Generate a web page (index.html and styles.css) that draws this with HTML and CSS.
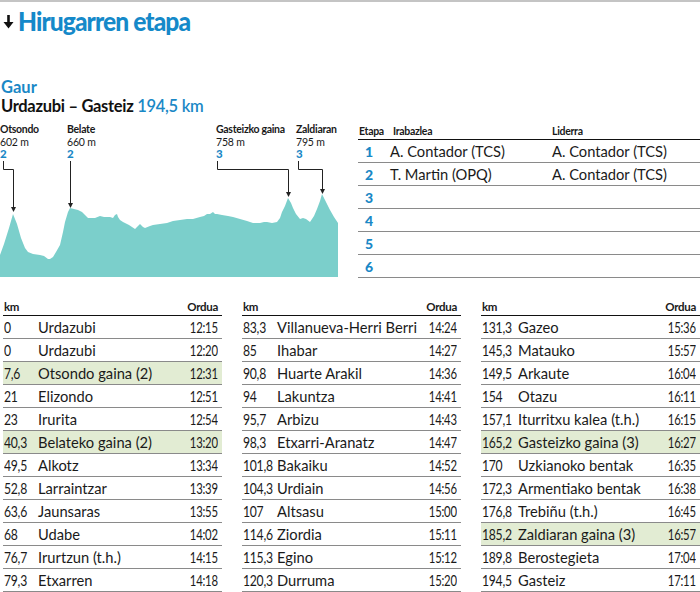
FILE: index.html
```html
<!DOCTYPE html>
<html lang="eu">
<head>
<meta charset="utf-8">
<title>Hirugarren etapa</title>
<link rel="stylesheet" href="styles.css">
</head>
<body>
<div class="page">
  <div class="topline"></div>
  <h1 class="title">
    <svg class="arrow" width="11" height="14" viewBox="0 0 11 14"><path d="M5.5,0 V9" stroke="#111" stroke-width="2.6" fill="none"/><polygon points="0.5,7 10.5,7 5.5,13.5" fill="#111"/></svg>
    <span class="title-text">Hirugarren etapa</span>
  </h1>
  <div class="route">
    <div class="gaur">Gaur</div>
    <div class="path">Urdazubi – Gasteiz <span class="dist">194,5 km</span></div>
  </div>

  <div class="mid">
    <div class="profile">
      <svg width="340" height="160" viewBox="0 0 340 160" class="profile-svg">
        <polygon class="terrain" points="0,135 4,124 9,108 13,94 17,104 21,118 25,128 28,132 33,134 40,135 44,136 48,139 50,139 53,137 56,132 60,125 63,112 65,102 68,92 70,88 74,89 78,90 82,92 86,96 88,98 92,98 95,98 100,96 104,97 110,97 113,98 115,95 117,94 118,97 120,100 123,102 125,103 129,105 132,107 135,109 138,106 140,104 143,107 145,108 150,106 153,105 160,104 167,103 170,102 173,101 180,100 187,99 193,99 200,97 204,96 207,94 210,94 213,92 215,94 217,94 222,95 228,96 233,97 240,99 247,101 253,103 260,103 264,102 267,102 272,103 277,102 280,98 282,92 285,86 288,78 291,83 293,88 296,94 300,99 303,98 306,99 310,102 314,96 317,89 320,81 322,74 325,80 330,90 334,97 338,103 338,157 0,157"/>
        <g class="leaders">
          <path d="M3.5,41 V49.5 H13.5 V88"/>
          <path d="M70.5,41 V84"/>
          <path d="M217.5,41 V49.5 H288.5 V73"/>
          <path d="M298.5,41 V49.5 H322.5 V70"/>
        </g>
        <g class="arrowheads">
          <polygon points="11,87 16,87 13.5,92"/>
          <polygon points="68,83 73,83 70.5,88"/>
          <polygon points="286,72 291,72 288.5,77"/>
          <polygon points="320,69 325,69 322.5,74"/>
        </g>
        <text class="pk-name" x="0" y="13">Otsondo</text>
        <text class="pk-alt" x="0" y="26">602 m</text>
        <text class="pk-cat" x="0" y="38">2</text>
        <text class="pk-name" x="67" y="13">Belate</text>
        <text class="pk-alt" x="67" y="26">660 m</text>
        <text class="pk-cat" x="67" y="38">2</text>
        <text class="pk-name" x="216" y="13">Gasteizko gaina</text>
        <text class="pk-alt" x="216" y="26">758 m</text>
        <text class="pk-cat" x="216" y="38">3</text>
        <text class="pk-name" x="296" y="13">Zaldiaran</text>
        <text class="pk-alt" x="296" y="26">795 m</text>
        <text class="pk-cat" x="296" y="38">3</text>
      </svg>
    </div>

    <div class="stages">
      <div class="st-head">
        <span class="c-num">Etapa</span><span class="c-win">Irabazlea</span><span class="c-lead">Liderra</span>
      </div>
      <div class="st-row"><span class="c-num n">1</span><span class="c-win">A. Contador (TCS)</span><span class="c-lead">A. Contador (TCS)</span></div>
      <div class="st-row"><span class="c-num n">2</span><span class="c-win">T. Martin (OPQ)</span><span class="c-lead">A. Contador (TCS)</span></div>
      <div class="st-row"><span class="c-num n">3</span><span class="c-win"></span><span class="c-lead"></span></div>
      <div class="st-row"><span class="c-num n">4</span><span class="c-win"></span><span class="c-lead"></span></div>
      <div class="st-row"><span class="c-num n">5</span><span class="c-win"></span><span class="c-lead"></span></div>
      <div class="st-row"><span class="c-num n">6</span><span class="c-win"></span><span class="c-lead"></span></div>
    </div>
  </div>

  <div class="schedule">
    <div class="sched-col">
      <div class="sc-head"><span>km</span><span></span><span class="t">Ordua</span></div>
      <div class="sc-row"><span class="km">0</span><span class="nm">Urdazubi</span><span class="t">12:15</span></div>
      <div class="sc-row"><span class="km">0</span><span class="nm">Urdazubi</span><span class="t">12:20</span></div>
      <div class="sc-row hl"><span class="km">7,6</span><span class="nm">Otsondo gaina (2)</span><span class="t">12:31</span></div>
      <div class="sc-row"><span class="km">21</span><span class="nm">Elizondo</span><span class="t">12:51</span></div>
      <div class="sc-row"><span class="km">23</span><span class="nm">Irurita</span><span class="t">12:54</span></div>
      <div class="sc-row hl"><span class="km">40,3</span><span class="nm">Belateko gaina (2)</span><span class="t">13:20</span></div>
      <div class="sc-row"><span class="km">49,5</span><span class="nm">Alkotz</span><span class="t">13:34</span></div>
      <div class="sc-row"><span class="km">52,8</span><span class="nm">Larraintzar</span><span class="t">13:39</span></div>
      <div class="sc-row"><span class="km">63,6</span><span class="nm">Jaunsaras</span><span class="t">13:55</span></div>
      <div class="sc-row"><span class="km">68</span><span class="nm">Udabe</span><span class="t">14:02</span></div>
      <div class="sc-row"><span class="km">76,7</span><span class="nm">Irurtzun (t.h.)</span><span class="t">14:15</span></div>
      <div class="sc-row"><span class="km">79,3</span><span class="nm">Etxarren</span><span class="t">14:18</span></div>
    </div>
    <div class="sched-col">
      <div class="sc-head"><span>km</span><span></span><span class="t">Ordua</span></div>
      <div class="sc-row"><span class="km">83,3</span><span class="nm">Villanueva-Herri Berri</span><span class="t">14:24</span></div>
      <div class="sc-row"><span class="km">85</span><span class="nm">Ihabar</span><span class="t">14:27</span></div>
      <div class="sc-row"><span class="km">90,8</span><span class="nm">Huarte Arakil</span><span class="t">14:36</span></div>
      <div class="sc-row"><span class="km">94</span><span class="nm">Lakuntza</span><span class="t">14:41</span></div>
      <div class="sc-row"><span class="km">95,7</span><span class="nm">Arbizu</span><span class="t">14:43</span></div>
      <div class="sc-row"><span class="km">98,3</span><span class="nm">Etxarri-Aranatz</span><span class="t">14:47</span></div>
      <div class="sc-row"><span class="km">101,8</span><span class="nm">Bakaiku</span><span class="t">14:52</span></div>
      <div class="sc-row"><span class="km">104,3</span><span class="nm">Urdiain</span><span class="t">14:56</span></div>
      <div class="sc-row"><span class="km">107</span><span class="nm">Altsasu</span><span class="t">15:00</span></div>
      <div class="sc-row"><span class="km">114,6</span><span class="nm">Ziordia</span><span class="t">15:11</span></div>
      <div class="sc-row"><span class="km">115,3</span><span class="nm">Egino</span><span class="t">15:12</span></div>
      <div class="sc-row"><span class="km">120,3</span><span class="nm">Durruma</span><span class="t">15:20</span></div>
    </div>
    <div class="sched-col wide-km">
      <div class="sc-head"><span>km</span><span></span><span class="t">Ordua</span></div>
      <div class="sc-row"><span class="km">131,3</span><span class="nm">Gazeo</span><span class="t">15:36</span></div>
      <div class="sc-row"><span class="km">145,3</span><span class="nm">Matauko</span><span class="t">15:57</span></div>
      <div class="sc-row"><span class="km">149,5</span><span class="nm">Arkaute</span><span class="t">16:04</span></div>
      <div class="sc-row"><span class="km">154</span><span class="nm">Otazu</span><span class="t">16:11</span></div>
      <div class="sc-row"><span class="km">157,1</span><span class="nm">Iturritxu kalea (t.h.)</span><span class="t">16:15</span></div>
      <div class="sc-row hl"><span class="km">165,2</span><span class="nm">Gasteizko gaina (3)</span><span class="t">16:27</span></div>
      <div class="sc-row"><span class="km">170</span><span class="nm">Uzkianoko bentak</span><span class="t">16:35</span></div>
      <div class="sc-row"><span class="km">172,3</span><span class="nm">Armentiako bentak</span><span class="t">16:38</span></div>
      <div class="sc-row"><span class="km">176,8</span><span class="nm">Trebiñu (t.h.)</span><span class="t">16:45</span></div>
      <div class="sc-row hl"><span class="km">185,2</span><span class="nm">Zaldiaran gaina (3)</span><span class="t">16:57</span></div>
      <div class="sc-row"><span class="km">189,8</span><span class="nm">Berostegieta</span><span class="t">17:04</span></div>
      <div class="sc-row"><span class="km">194,5</span><span class="nm">Gasteiz</span><span class="t">17:11</span></div>
    </div>
  </div>
</div>
</body>
</html>
```

FILE: styles.css
```css
* { box-sizing: border-box; }
html, body { margin: 0; padding: 0; background: #fff; }
body {
  font-family: Lato, "Open Sans", sans-serif;
  color: #1a1a1a;
  width: 700px;
  height: 592px;
  overflow: hidden;
}
.page { width: 700px; }

.topline { height: 2px; background: #c4c4c4; }

.title {
  margin: 0;
  height: 40px;
  padding: 0 0 0 3px;
  display: flex;
  align-items: center;
  line-height: 30px;
}
.arrow { flex: none; margin-right: 4px; margin-top: -1px; }
.title-text {
  display: inline-block;
  font-family: Lato, sans-serif;
  font-weight: 900;
  font-size: 27px;
  color: #1589c9;
  letter-spacing: -1px;
  transform: scaleX(0.91);
  transform-origin: left center;
  white-space: nowrap;
  margin-top: -3px;
}

.route {
  padding: 37px 0 0 1px;
  height: 78px;
  font-family: Lato, sans-serif;
  font-weight: 700;
  font-size: 16.5px;
  line-height: 17px;
}
.gaur { color: #1a88c6; margin-bottom: 2px; }
.path { color: #111; letter-spacing: -0.3px; }
.dist { color: #1a88c6; font-weight: 600; }

.mid {
  display: flex;
  height: 160px;
}
.profile { width: 358px; flex: none; }
.profile-svg { display: block; }
.terrain { fill: #7bcfcb; }
.leaders path { fill: none; stroke: #222; stroke-width: 1; }
.arrowheads polygon { fill: #222; }
.pk-name { font-family: Lato, sans-serif; font-weight: 700; font-size: 10.5px; letter-spacing: -0.3px; fill: #1a1a1a; }
.pk-alt { font-family: Lato, sans-serif; font-size: 10.5px; letter-spacing: -0.2px; fill: #1a1a1a; }
.pk-cat { font-family: Lato, sans-serif; font-weight: 900; font-size: 11.5px; fill: #1a88c6; }

.stages { flex: 1; }
.st-head {
  display: flex;
  height: 20px;
  align-items: flex-end;
  padding-bottom: 2px;
  border-bottom: 1.5px solid #111;
  font-family: Lato, sans-serif;
  font-weight: 700;
  font-size: 10.5px;
  letter-spacing: -0.3px;
  line-height: 12px;
}
.st-row {
  display: flex;
  height: 23px;
  align-items: center;
  border-bottom: 1px solid #8a8a8a;
  font-size: 14.7px;
}
.c-num { width: 32px; flex: none; padding-left: 1px; }
.c-num.n { padding-left: 7px; color: #1a88c6; font-weight: 900; font-size: 14px; }
.c-win { width: 162px; flex: none; }
.c-lead { flex: 1; }
.st-head .c-num { width: 35px; }
.st-head .c-win { width: 159px; }

.schedule {
  margin-top: 18px;
  padding-left: 3px;
  display: grid;
  grid-template-columns: 1fr 1fr 1fr;
  column-gap: 20px;
}
.sc-head, .sc-row {
  display: grid;
  grid-template-columns: 34px 1fr auto;
  align-items: center;
}
.wide-km .sc-head, .wide-km .sc-row { grid-template-columns: 36px 1fr auto; }
.sc-head {
  height: 18px;
  align-items: end;
  padding-bottom: 2px;
  border-bottom: 1.5px solid #111;
  font-family: Lato, sans-serif;
  font-weight: 700;
  font-size: 11.5px;
  letter-spacing: -0.3px;
  line-height: 12px;
  padding-left: 1px;
  padding-right: 4px;
}
.sc-row {
  height: 23px;
  border-bottom: 1px solid #8a8a8a;
  font-size: 14.7px;
  padding-left: 1px;
  padding-right: 4px;
}
.sc-row.hl { background: #e2ecd3; }
.km, .sc-row .t {
  display: inline-block;
  font-family: Lato, sans-serif;
  font-size: 14.5px;
  letter-spacing: -0.3px;
  white-space: nowrap;
}
.km { transform: scaleX(0.84); transform-origin: left center; }
.sc-row .t { transform: scaleX(0.78); }
.t { text-align: right; transform-origin: right center; }
.nm { white-space: nowrap; }
```
